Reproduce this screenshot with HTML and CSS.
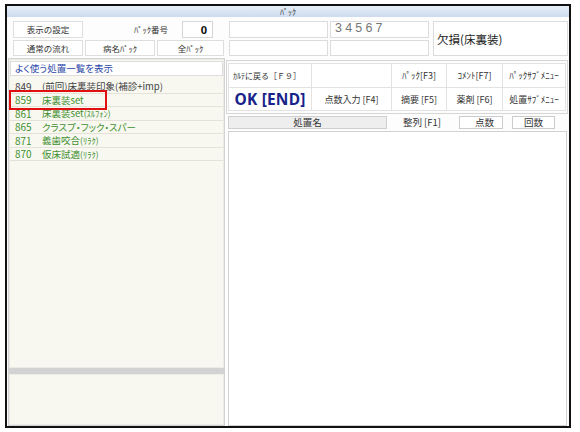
FILE: index.html
```html
<!DOCTYPE html>
<html lang="ja">
<head>
<meta charset="utf-8">
<title>ﾊﾟｯｸ</title>
<link rel="stylesheet" href="styles.css">
</head>
<body>
<div class="window">
  <div class="titlebar">ﾊﾟｯｸ</div>
  <div class="content">
    <div class="top-left">
      <div class="row1">
        <div class="cell w70">表示の設定</div>
        <div class="label">ﾊﾟｯｸ番号</div>
        <div class="numbox">0</div>
      </div>
      <div class="row2">
        <div class="cell">通常の流れ</div>
        <div class="cell">病名ﾊﾟｯｸ</div>
        <div class="cell">全ﾊﾟｯｸ</div>
      </div>
    </div>
    <div class="top-right">
      <div class="box"></div>
      <div class="box code">34567</div>
      <div class="box name">欠損(床裏装)</div>
      <div class="box"></div>
      <div class="box"></div>
    </div>
    <div class="left">
      <div class="panel upper">
        <div class="heading">よく使う処置一覧を表示</div>
        <ul class="list">
          <li class="item dark"><span class="no">849</span><span class="nm">(前回)床裏装印象(補診+imp)</span></li>
          <li class="item"><span class="no">859</span><span class="nm">床裏装set</span></li>
          <li class="item"><span class="no">861</span><span class="nm">床裏装set<span class="hw">(ｽﾙﾌｫﾝ)</span></span></li>
          <li class="item"><span class="no">865</span><span class="nm">クラスプ・フック・スパー</span></li>
          <li class="item"><span class="no">871</span><span class="nm">義歯咬合<span class="hw">(ﾘﾗｸ)</span></span></li>
          <li class="item"><span class="no">870</span><span class="nm">仮床試適<span class="hw">(ﾘﾗｸ)</span></span></li>
        </ul>
        <div class="mark"></div>
      </div>
      <div class="splitter"></div>
      <div class="panel lower"></div>
    </div>
    <div class="right">
      <div class="buttons">
        <div class="grid">
          <div class="btn start">ｶﾙﾃに戻る［Ｆ９］</div>
          <div class="btn"></div>
          <div class="btn">ﾊﾟｯｸ[F3]</div>
          <div class="btn">ｺﾒﾝﾄ[F7]</div>
          <div class="btn">ﾊﾟｯｸｻﾌﾞﾒﾆｭｰ</div>
          <div class="btn ok">OK [END]</div>
          <div class="btn">点数入力 [F4]</div>
          <div class="btn">摘要 [F5]</div>
          <div class="btn">薬剤 [F6]</div>
          <div class="btn">処置ｻﾌﾞﾒﾆｭｰ</div>
        </div>
      </div>
      <div class="header">
        <div class="h-name">処置名</div>
        <div class="h-sort">整列 [F1]</div>
        <div class="h-pts">点数</div>
        <div class="h-cnt">回数</div>
      </div>
      <div class="results"></div>
    </div>
  </div>
</div>
</body>
</html>
```

FILE: styles.css
```css
* { box-sizing: border-box; }

body {
  margin: 0;
  background: #ffffff;
  font-family: "Noto Sans CJK JP", "Noto Sans", sans-serif;
  font-size: 9.5px;
  color: #333333;
}

.window {
  margin: 4px 0 0 5px;
  width: 566px;
  height: 424px;
  border: 2px solid #111111;
  display: flex;
  flex-direction: column;
  background: #fdfdfd;
}

.titlebar {
  height: 11px;
  background: linear-gradient(#e6eef8, #ccdbee);
  text-align: center;
  font-size: 8px;
  line-height: 11px;
  color: #333333;
}

.content {
  flex: 1;
  display: grid;
  grid-template-columns: 217px 1fr;
  grid-template-rows: 41px 1fr;
  column-gap: 1px;
  padding-left: 1px;
  min-height: 0;
}

/* top left */
.top-left {
  padding: 4px 0 0 5px;
  display: flex;
  flex-direction: column;
  gap: 2px;
  font-size: 8.5px;
}
.row1 {
  display: flex;
  height: 17px;
  align-items: stretch;
}
.row2 {
  display: grid;
  grid-template-columns: 70px 70px 67px;
  column-gap: 2px;
  height: 16px;
}
.cell {
  border: 1px solid #dedede;
  background: #ffffff;
  text-align: center;
  line-height: 14px;
  white-space: nowrap;
}
.w70 { width: 70px; }
.label {
  flex: 1;
  text-align: right;
  padding-right: 14px;
  line-height: 16px;
}
.numbox {
  width: 31px;
  margin-right: 12px;
  border: 1px solid #d6d6d6;
  background: #ffffff;
  text-align: right;
  padding-right: 5px;
  font-family: "Noto Sans", sans-serif;
  font-weight: bold;
  font-size: 11px;
  line-height: 15px;
  color: #111111;
}

/* top right */
.top-right {
  padding: 4px 1px 0 3px;
  display: grid;
  grid-template-columns: 99px 99px 1fr;
  grid-template-rows: 17px 16px;
  gap: 2px;
}
.box {
  border: 1px solid #dcdcdc;
  background: #ffffff;
}
.code {
  font-family: "Liberation Sans", sans-serif;
  font-size: 12.5px;
  letter-spacing: 3.2px;
  color: #777777;
  line-height: 13px;
  padding-left: 4px;
}
.name {
  grid-column: 3;
  grid-row: 1 / 3;
  margin-left: 2px;
  display: flex;
  align-items: center;
  padding-left: 3px;
  font-size: 11.5px;
  font-feature-settings: "palt" 1;
  color: #222222;
}

/* left panel */
.left {
  display: flex;
  flex-direction: column;
  min-height: 0;
}
.panel {
  border: 1px solid #d3d3d3;
  box-shadow: inset 0 0 0 1px #ecece6;
  background: #f8f8f1;
}
.upper {
  flex: 1;
  position: relative;
  padding: 2px 1px;
}
.heading {
  height: 15px;
  background: #ffffff;
  border: 1px solid #dddddd;
  color: #2c48a8;
  padding-left: 4px;
  line-height: 13px;
  font-feature-settings: "palt" 1;
}
.list {
  list-style: none;
  margin: 4px 0 0 0;
  padding: 0;
}
.item {
  height: 13.5px;
  border-bottom: 1px solid #e2e2d8;
  display: flex;
  align-items: center;
  padding-left: 5px;
  color: #3f8f2f;
  white-space: nowrap;
}
.item.dark { color: #444444; }
.no {
  width: 27px;
  font-size: 10px;
}
.nm { font-feature-settings: "palt" 1; }
.hw { font-feature-settings: normal; font-size: 8.5px; }
.mark {
  position: absolute;
  left: 0;
  top: 31px;
  width: 98px;
  height: 20px;
  border: 2.5px solid #e01010;
}
.splitter {
  height: 4px;
  background: #d2d2d2;
}
.lower {
  height: 53px;
}

/* right */
.right {
  display: flex;
  flex-direction: column;
  min-height: 0;
}
.buttons {
  margin: 2px 1px 0 0;
  border: 1px solid #d6d6d6;
  padding: 2px 1px 2px 1px;
}
.grid {
  display: grid;
  grid-template-columns: 83px 80px 55px 56px 1fr;
  grid-template-rows: 24px 23px;
  border-top: 1px solid #e2e2e2;
  border-left: 1px solid #e2e2e2;
}
.btn {
  border-right: 1px solid #e2e2e2;
  border-bottom: 1px solid #e2e2e2;
  background: #ffffff;
  display: flex;
  align-items: center;
  justify-content: center;
  white-space: nowrap;
  font-size: 9px;
}
.btn.start {
  justify-content: flex-start;
  padding-left: 4px;
  font-size: 8px;
}
.btn.ok {
  font-family: "Noto Sans", sans-serif;
  font-weight: bold;
  font-size: 15.5px;
  letter-spacing: 0.2px;
  color: #17238a;
}

.header {
  margin: 2px 0 0 2px;
  height: 13px;
  display: flex;
}
.header > div {
  line-height: 11px;
  white-space: nowrap;
}
.h-name {
  width: 159px;
  background: #eeeeee;
  border: 1px solid #cfcfcf;
  text-align: center;
}
.h-sort {
  width: 70px;
  text-align: center;
  line-height: 13px !important;
}
.h-pts {
  width: 44px;
  margin-left: 2px;
  border: 1px solid #cccccc;
  background: #ffffff;
  text-align: right;
  padding-right: 8px;
}
.h-cnt {
  width: 43px;
  margin-left: 9px;
  border: 1px solid #cccccc;
  background: #ffffff;
  text-align: center;
}
.results {
  flex: 1;
  margin: 2px 2px 0 2px;
  border: 1px solid #d2d2d2;
  background: #ffffff;
}
```
